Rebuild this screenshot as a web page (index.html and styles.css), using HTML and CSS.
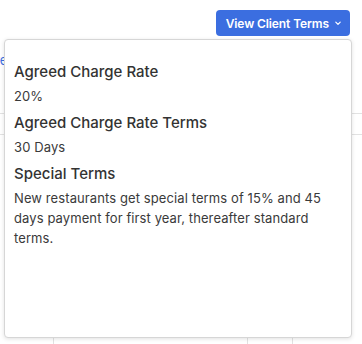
FILE: index.html
```html
<!DOCTYPE html>
<html lang="en">

<head>
    <meta charset="UTF-8">
    <meta name="viewport" content="width=device-width, initial-scale=1.0">
    <title>Client Terms</title>
    <link rel="stylesheet" href="styles.css">
</head>

<body>
    <div class="page">
        <div class="toolbar">
            <button class="terms-btn">View Client Terms
                <svg width="8" height="8" viewBox="0 0 8 8"><path d="M1.8 3.2 L4 5.4 L6.2 3.2" fill="none" stroke="#fff" stroke-width="1.2" stroke-linecap="round" stroke-linejoin="round"/></svg>
            </button>
        </div>
        <div class="back">
            <a class="back-link" href="#">Show more</a>
            <div class="back-row first"></div>
            <div class="back-row"></div>
            <div class="back-grid">
                <div class="cell-blank"></div>
                <div class="cell-amount">8200</div>
                <div class="cell-cur">GBP</div>
                <div class="cell-rest"></div>
            </div>
        </div>

        <div class="popover">
            <div class="term">
                <h3>Agreed Charge Rate</h3>
                <p>20%</p>
            </div>
            <div class="term">
                <h3>Agreed Charge Rate Terms</h3>
                <p>30 Days</p>
            </div>
            <div class="term">
                <h3>Special Terms</h3>
                <p>New restaurants get special terms of 15% and 45 days payment for first year, thereafter standard terms.</p>
            </div>
        </div>
    </div>
</body>

</html>
```

FILE: styles.css
```css
body {
    font-family: 'Inter', 'Liberation Sans', sans-serif;
    background-color: #ffffff;
    color: #333;
    margin: 0;
    padding: 0;
}

.page {
    position: relative;
    width: 362px;
    height: 344px;
    overflow: hidden;
}

.toolbar {
    display: flex;
    justify-content: flex-end;
    padding: 10px 12px 0 0;
}

.terms-btn {
    display: flex;
    align-items: center;
    gap: 5px;
    height: 26px;
    padding: 0 8px 0 10px;
    background-color: #3b6ee0;
    color: #fff;
    border: none;
    border-radius: 4px;
    font-family: inherit;
    font-size: 12px;
    font-weight: 600;
    letter-spacing: -0.1px;
    cursor: pointer;
}

.back {
    position: relative;
}

.back-link {
    display: block;
    margin: 16px 0 0 -62px;
    font-size: 13px;
    color: #3b6ee0;
    text-decoration: none;
    height: 20px;
}

.back-row {
    height: 20px;
    border-bottom: 1px solid #e2e2e2;
}

.back-row.first {
    height: 41px;
}

.back-grid {
    display: grid;
    grid-template-columns: 54px 194px 45px 1fr;
    margin-top: 171px;
    height: 40px;
    font-size: 13px;
    color: #555;
}

.cell-blank,
.cell-amount,
.cell-cur {
    border-right: 1px solid #e2e2e2;
}

.cell-amount {
    text-align: right;
    padding: 4px 10px 0 0;
}

.cell-cur {
    padding: 4px 0 0 10px;
}

.popover {
    position: absolute;
    top: 39px;
    left: 4px;
    width: 348px;
    height: 299px;
    padding: 22px 20px 0 9px;
    box-sizing: border-box;
    background: #fff;
    border: 1px solid #d6d6d6;
    border-radius: 4px;
    box-shadow: 0 1px 4px rgba(0, 0, 0, 0.12);
}

.term h3 {
    margin: 0;
    font-size: 15px;
    font-weight: 500;
    line-height: 20px;
    color: #333;
}

.term p {
    margin: 4px 0 7px;
    font-size: 13px;
    line-height: 20px;
    letter-spacing: 0.1px;
    color: #3a3a3a;
}
```
